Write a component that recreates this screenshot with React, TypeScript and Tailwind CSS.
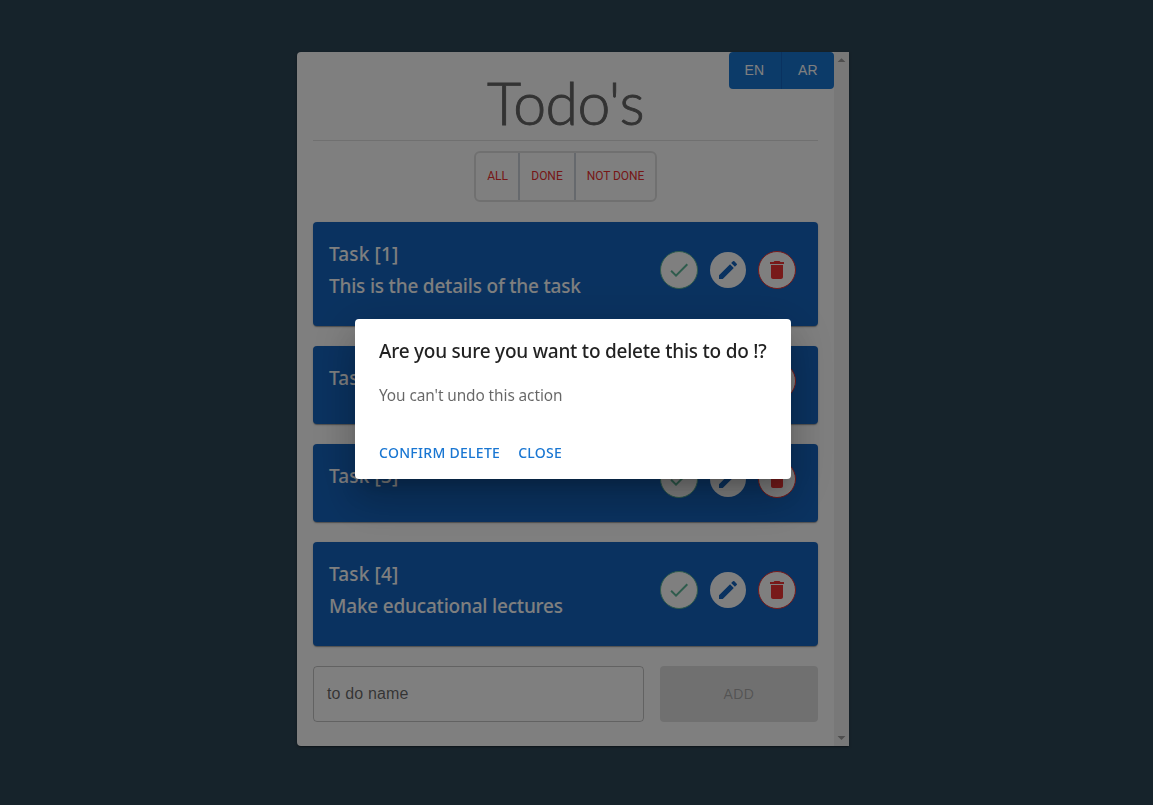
import { MdArrowDropDown, MdArrowDropUp, MdCheck, MdDelete, MdEdit } from "react-icons/md";

type Task = { title: string; details?: string };

const tasks: Task[] = [
  { title: "Task [1]", details: "This is the details of the task" },
  { title: "Task [2]" },
  { title: "Task [3]" },
  { title: "Task [4]", details: "Make educational lectures" },
];

function TaskCard({ title, details }: Task) {
  return (
    <article className="flex items-center justify-between rounded-[4px] bg-[#1565c0] px-4 pt-4 pb-6 text-white shadow-[0_2px_1px_-1px_rgba(0,0,0,0.2),0_1px_1px_0_rgba(0,0,0,0.14),0_1px_3px_0_rgba(0,0,0,0.12)]">
      <div className="self-start text-[19px] leading-8 font-medium whitespace-nowrap">
        <h2 className="tracking-[0.15px]">{title}</h2>
        {details && <p className="tracking-[-0.2px]">{details}</p>}
      </div>
      <div className="mr-1.5 flex items-center gap-3">
        <button aria-label="Done" className="grid size-[38px] place-items-center rounded-full border border-[#5fb89a] bg-white text-[#5fb89a]">
          <MdCheck size={24} />
        </button>
        <button aria-label="Edit" className="grid size-9 place-items-center rounded-full bg-white text-[#1565c0]">
          <MdEdit size={24} />
        </button>
        <button aria-label="Delete" className="grid size-[38px] place-items-center rounded-full border border-[#f03535] bg-white text-[#f03535]">
          <MdDelete size={24} />
        </button>
      </div>
    </article>
  );
}

export default function App() {
  return (
    <div className="h-screen overflow-hidden bg-[#2d4656] font-['Noto_Sans',sans-serif]">
      <div className="flex h-full pt-[52px] pl-[297px]">
        <main className="flex h-[694px] w-[552px] overflow-hidden rounded-l-[4px] bg-white shadow-[0_2px_1px_-1px_rgba(0,0,0,0.2),0_1px_3px_0_rgba(0,0,0,0.3)]">
          <div className="relative w-[537px] px-4">
            <div className="absolute top-0 right-0 flex h-[37px] w-[105px] overflow-hidden rounded-[4px] bg-[#1976d2] font-['Liberation_Sans',sans-serif] text-[14px] tracking-[0.4px] text-white">
              <button className="w-[53px] border-r border-[#1565c0] pr-px">EN</button>
              <button className="w-[52px]">AR</button>
            </div>
            <h1 className="h-[89px] border-b border-black/12 pt-[15px] text-center font-['Lato',sans-serif] text-[59px] leading-[72px] font-light tracking-[-0.6px] text-[#666] [-webkit-text-stroke:0.9px_#666]">
              Todo's
            </h1>
            <div className="mx-auto mt-[10px] flex h-[51px] w-[183px] rounded-[6px] border-2 border-black/12 font-['Roboto',sans-serif] text-[12px] font-[450] tracking-[-0.05px] text-[#ed2f2f]">
              <button className="w-[44px] border-r-2 border-[#ccd3da] pb-0.5 pl-px">ALL</button>
              <button className="w-[56px] border-r-2 border-[#ccd3da] pb-0.5">DONE</button>
              <button className="flex-1 pb-0.5">NOT DONE</button>
            </div>
            <section className="mt-5 flex flex-col gap-5">
              {tasks.map((task) => (
                <TaskCard key={task.title} {...task} />
              ))}
            </section>
            <div className="mt-5 flex h-14 gap-4 font-['Liberation_Sans',sans-serif]">
              <div className="flex w-[331px] items-center rounded-[4px] border border-black/23 px-[13px] text-[16px] tracking-[0.15px] text-black/60">
                to do name
              </div>
              <button className="flex-1 rounded-[4px] bg-black/12 text-[14px] tracking-[0.4px] text-black/26">ADD</button>
            </div>
          </div>
          <div className="flex w-[15px] flex-col items-center justify-between bg-[#f1f1f1] text-[#9c9c9c]">
            <MdArrowDropUp size={19} className="-mt-px shrink-0" />
            <MdArrowDropDown size={19} className="-mb-px shrink-0" />
          </div>
        </main>
      </div>
      <div className="fixed inset-0 bg-black/50">
        <div role="dialog" className="absolute top-[319px] left-[355px] h-[160px] w-[436px] rounded-[4px] bg-white px-6 py-4 whitespace-nowrap shadow-[0_11px_15px_-7px_rgba(0,0,0,0.2),0_24px_38px_3px_rgba(0,0,0,0.14),0_9px_46px_8px_rgba(0,0,0,0.12)]">
          <h2 className="text-[19px] leading-8 font-medium tracking-[-0.23px] text-black/87">
            Are you sure you want to delete this to do !?
          </h2>
          <p className="mt-[17px] text-[15.4px] leading-6 tracking-[-0.09px] text-black/60">You can't undo this action</p>
          <div className="mt-[33px] flex gap-[18px] text-[14px] leading-6 font-medium tracking-[0.29px] text-[#1976d2]">
            <button>CONFIRM DELETE</button>
            <button>CLOSE</button>
          </div>
        </div>
      </div>
    </div>
  );
}
